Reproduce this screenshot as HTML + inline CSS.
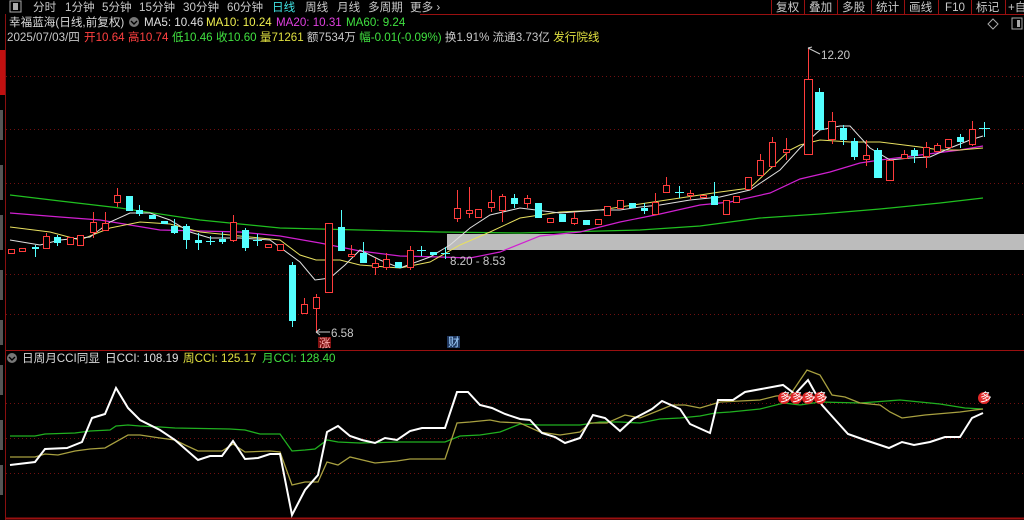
<!DOCTYPE html>
<html><head><meta charset="utf-8"><style>
html,body{margin:0;padding:0;background:#000;width:1024px;height:520px;overflow:hidden}
svg{display:block}
text{font-family:"Liberation Sans","Noto Sans CJK SC",sans-serif;font-size:11.6px}
.r{stroke:#ff3c3c;fill:#000;stroke-width:1}
.c{fill:#54ffff;stroke:#54ffff;stroke-width:1}
.wr{stroke:#ff3c3c;stroke-width:1}
.wc{stroke:#54ffff;stroke-width:1}
.g{stroke:#701010;stroke-dasharray:1 3;stroke-width:1}
</style></head><body>
<svg width="1024" height="520" viewBox="0 0 1024 520" xmlns="http://www.w3.org/2000/svg">
<rect width="1024" height="520" fill="#000"/>
<line x1="5.5" y1="14" x2="5.5" y2="520" stroke="#8a1010"/>
<rect x="0" y="50" width="5" height="45" fill="#c01010"/>
<rect x="0" y="110" width="3" height="30" fill="#555"/>
<rect x="0" y="165" width="3" height="35" fill="#555"/>
<rect x="0" y="215" width="3" height="35" fill="#555"/>
<rect x="0" y="270" width="3" height="30" fill="#555"/>
<rect x="0" y="320" width="3" height="25" fill="#555"/>
<rect x="0" y="365" width="3" height="30" fill="#555"/>
<rect x="0" y="420" width="3" height="30" fill="#555"/>
<rect x="0" y="465" width="3" height="30" fill="#555"/>
<rect x="10" y="1" width="11" height="11" fill="none" stroke="#aaa"/>
<rect x="13" y="3" width="5" height="7" fill="#aaa"/>
<g fill="#c8c8c8">
<text x="33" y="11">分时</text><text x="65" y="11">1分钟</text><text x="102" y="11">5分钟</text><text x="139" y="11">15分钟</text><text x="183" y="11">30分钟</text><text x="227" y="11">60分钟</text>
<text x="272" y="11" fill="#40e0e0">日线</text><text x="305" y="11">周线</text><text x="337" y="11">月线</text><text x="368" y="11">多周期</text><text x="410" y="11">更多 ›</text>
</g>
<line x1="420" y1="14.5" x2="1024" y2="14.5" stroke="#9a1010"/>
<g stroke="#9a1010"><line x1="771.5" y1="0" x2="771.5" y2="14"/><line x1="804.5" y1="0" x2="804.5" y2="14"/><line x1="837.5" y1="0" x2="837.5" y2="14"/><line x1="871.5" y1="0" x2="871.5" y2="14"/><line x1="904.5" y1="0" x2="904.5" y2="14"/><line x1="938.5" y1="0" x2="938.5" y2="14"/><line x1="971.5" y1="0" x2="971.5" y2="14"/><line x1="1005.5" y1="0" x2="1005.5" y2="14"/></g>
<g fill="#c8c8c8"><text x="776" y="11">复权</text><text x="809" y="11">叠加</text><text x="842" y="11">多股</text><text x="876" y="11">统计</text><text x="909" y="11">画线</text><text x="945" y="11">F10</text><text x="976" y="11">标记</text><text x="1008" y="11">+自</text></g>
<path d="M993 19 L998 24 L993 29 L988 24 Z" fill="none" stroke="#aaa"/>
<rect x="1012" y="18" width="10" height="11" fill="none" stroke="#aaa"/><rect x="1017" y="20" width="3" height="7" fill="#aaa"/>
<text x="9" y="26" fill="#d8d8d8">幸福蓝海(日线,前复权)</text>
<circle cx="134" cy="22" r="5" fill="#777"/><path d="M131 21 L134 24 L137 21" stroke="#000" fill="none" stroke-width="1.4"/>
<text x="144" y="26" fill="#e0e0e0">MA5: 10.46</text>
<text x="206" y="26" fill="#f0f050">MA10: 10.24</text>
<text x="276" y="26" fill="#e040e0">MA20: 10.31</text>
<text x="346" y="26" fill="#40e040">MA60: 9.24</text>
<text x="7" y="41" fill="#c8c8c8">2025/07/03/四</text>
<text x="84" y="41" fill="#ff4040">开10.64 高10.74</text>
<text x="172" y="41" fill="#40e040">低10.46</text><text x="216" y="41" fill="#e0e0e0"><tspan fill="#40e040">收10.60</tspan> <tspan fill="#e0e040">量71261</tspan> <tspan fill="#c8c8c8">额7534万</tspan> <tspan fill="#40e040">幅-0.01(-0.09%)</tspan> <tspan fill="#c8c8c8">换1.91% 流通3.73亿</tspan> <tspan fill="#e0e040">发行院线</tspan></text>
<g class="g"><line x1="6" y1="76.5" x2="1024" y2="76.5"/><line x1="6" y1="129.5" x2="1024" y2="129.5"/><line x1="6" y1="183.5" x2="1024" y2="183.5"/><line x1="6" y1="274.5" x2="1024" y2="274.5"/><line x1="6" y1="314.5" x2="1024" y2="314.5"/>
<line x1="6" y1="403.5" x2="1024" y2="403.5"/><line x1="6" y1="438.5" x2="1024" y2="438.5"/><line x1="6" y1="473.5" x2="1024" y2="473.5"/></g>
<rect x="447" y="234" width="577" height="16" fill="#bcbcbc"/>
<polyline fill="none" stroke="#20c020" stroke-width="1.2" points="10,195 60,201 120,208 200,220 280,228 360,230 440,232 520,233 560,232 640,230 700,226 760,218 820,214 880,209 940,203 983,198"/>
<polyline fill="none" stroke="#d020d0" stroke-width="1.2" points="10,213 60,217 100,220 130,225 160,230 200,231 240,232 280,236 320,243 360,251 400,256 440,257 470,258 500,252 540,236 580,232 620,222 660,214 700,205 730,202 770,193 800,179 830,172 860,163 880,160 920,155 960,150 983,146"/>
<polyline fill="none" stroke="#e8e060" stroke-width="1" points="10,227 50,232 80,240 110,228 140,222 170,224 200,232 240,236 280,240 300,255 316,260 340,260 360,265 400,268 430,262 460,245 490,232 520,218 560,212 600,210 640,204 680,198 720,192 750,188 790,150 800,145 820,140 850,142 880,142 920,147 940,150 960,150 983,148"/>
<polyline fill="none" stroke="#e0e0e0" stroke-width="1" points="10,240 40,245 60,240 90,237 110,222 130,213 150,213 170,220 190,232 210,238 240,238 270,240 300,262 315,280 330,278 345,265 360,250 380,260 400,268 430,257 450,245 470,228 490,215 520,208 560,213 600,210 620,210 640,207 660,205 690,200 720,197 750,190 780,170 800,148 820,130 840,126 850,126 870,148 890,160 910,158 930,157 950,148 970,140 983,136"/>
<g>
<rect class="r" x="8.5" y="249.5" width="6" height="4"/>
<rect class="r" x="19.5" y="248.5" width="6" height="3"/>
<line class="wc" x1="35.5" y1="245" x2="35.5" y2="257"/><rect class="c" x="32.5" y="247.5" width="6" height="1"/>
<line class="wr" x1="46.5" y1="233" x2="46.5" y2="249"/><rect class="r" x="43.5" y="236.5" width="6" height="12"/>
<line class="wc" x1="57.5" y1="235" x2="57.5" y2="246"/><rect class="c" x="54.5" y="237.5" width="6" height="5"/>
<rect class="r" x="67.5" y="237.5" width="6" height="7"/>
<rect class="r" x="77.5" y="235.5" width="6" height="10"/>
<line class="wr" x1="93.5" y1="212" x2="93.5" y2="238"/><rect class="r" x="90.5" y="222.5" width="6" height="10"/>
<line class="wr" x1="105.5" y1="212" x2="105.5" y2="231"/><rect class="r" x="102.5" y="223.5" width="6" height="7"/>
<line class="wr" x1="117.5" y1="188" x2="117.5" y2="207"/><rect class="r" x="114.5" y="195.5" width="6" height="7"/>
<rect class="c" x="126.5" y="196.5" width="6" height="14"/>
<line class="wc" x1="139.5" y1="205" x2="139.5" y2="216"/><rect class="c" x="136.5" y="210.5" width="6" height="3"/>
<rect class="c" x="149.5" y="215.5" width="6" height="3"/>
<rect class="c" x="161.5" y="221.5" width="6" height="2"/>
<line class="wc" x1="174.5" y1="219" x2="174.5" y2="234"/><rect class="c" x="171.5" y="226.5" width="6" height="6"/>
<line class="wc" x1="186.5" y1="224" x2="186.5" y2="249"/><rect class="c" x="183.5" y="226.5" width="6" height="13"/>
<line class="wc" x1="198.5" y1="233" x2="198.5" y2="250"/><rect class="c" x="195.5" y="240.5" width="6" height="2"/>
<line class="wc" x1="210.5" y1="236" x2="210.5" y2="245"/><line class="wc" x1="206" y1="241.5" x2="215" y2="241.5"/>
<line class="wc" x1="222.5" y1="232" x2="222.5" y2="244"/><rect class="c" x="219.5" y="239.5" width="6" height="2"/>
<line class="wr" x1="233.5" y1="215" x2="233.5" y2="242"/><rect class="r" x="230.5" y="222.5" width="6" height="18"/>
<line class="wc" x1="245.5" y1="228" x2="245.5" y2="251"/><rect class="c" x="242.5" y="230.5" width="6" height="17"/>
<line class="wc" x1="257.5" y1="234" x2="257.5" y2="246"/><line class="wc" x1="253" y1="240.5" x2="262" y2="240.5"/>
<rect class="r" x="265.5" y="244.5" width="6" height="3"/>
<rect class="r" x="277.5" y="244.5" width="6" height="6"/>
<line class="wc" x1="292.5" y1="262" x2="292.5" y2="327"/><rect class="c" x="289.5" y="265.5" width="6" height="55"/>
<line class="wr" x1="304.5" y1="298" x2="304.5" y2="313"/><rect class="r" x="301.5" y="304.5" width="6" height="9"/>
<line class="wr" x1="316.5" y1="294" x2="316.5" y2="333"/><rect class="r" x="313.5" y="297.5" width="6" height="11"/>
<rect class="r" x="325.5" y="223.5" width="7" height="69"/>
<line class="wc" x1="341.5" y1="210" x2="341.5" y2="250"/><rect class="c" x="338.5" y="227.5" width="6" height="23"/>
<line class="wr" x1="351.5" y1="245" x2="351.5" y2="256"/><rect class="r" x="348.5" y="254.5" width="6" height="2"/>
<line class="wc" x1="363.5" y1="242" x2="363.5" y2="263"/><rect class="c" x="360.5" y="253.5" width="6" height="9"/>
<line class="wr" x1="375.5" y1="258" x2="375.5" y2="275"/><rect class="r" x="372.5" y="263.5" width="6" height="4"/>
<line class="wr" x1="386.5" y1="253" x2="386.5" y2="270"/><rect class="r" x="383.5" y="259.5" width="6" height="8"/>
<rect class="c" x="395.5" y="262.5" width="6" height="5"/>
<line class="wr" x1="410.5" y1="246" x2="410.5" y2="270"/><rect class="r" x="407.5" y="250.5" width="6" height="17"/>
<line class="wc" x1="421.5" y1="246" x2="421.5" y2="256"/><line class="wc" x1="417" y1="250.5" x2="426" y2="250.5"/>
<rect class="c" x="430.5" y="252.5" width="6" height="2"/>
<line class="wc" x1="445.5" y1="247" x2="445.5" y2="259"/><line class="wc" x1="441" y1="253.5" x2="450" y2="253.5"/>
<line class="wr" x1="457.5" y1="190" x2="457.5" y2="222"/><rect class="r" x="454.5" y="208.5" width="6" height="10"/>
<line class="wr" x1="469.5" y1="187" x2="469.5" y2="218"/><rect class="r" x="466.5" y="210.5" width="6" height="3"/>
<rect class="r" x="475.5" y="209.5" width="6" height="8"/>
<line class="wr" x1="491.5" y1="190" x2="491.5" y2="212"/><rect class="r" x="488.5" y="202.5" width="6" height="5"/>
<line class="wr" x1="502.5" y1="194" x2="502.5" y2="222"/><rect class="r" x="499.5" y="196.5" width="6" height="14"/>
<line class="wc" x1="514.5" y1="194" x2="514.5" y2="208"/><rect class="c" x="511.5" y="198.5" width="6" height="5"/>
<line class="wr" x1="527.5" y1="195" x2="527.5" y2="208"/><rect class="r" x="524.5" y="198.5" width="6" height="5"/>
<rect class="c" x="535.5" y="203.5" width="6" height="14"/>
<rect class="r" x="547.5" y="218.5" width="6" height="4"/>
<rect class="c" x="559.5" y="214.5" width="6" height="7"/>
<line class="wr" x1="574.5" y1="212" x2="574.5" y2="225"/><rect class="r" x="571.5" y="218.5" width="6" height="5"/>
<rect class="c" x="583.5" y="220.5" width="6" height="4"/>
<rect class="r" x="595.5" y="219.5" width="6" height="5"/>
<rect class="r" x="604.5" y="206.5" width="6" height="9"/>
<rect class="r" x="617.5" y="200.5" width="6" height="8"/>
<rect class="c" x="629.5" y="203.5" width="6" height="4"/>
<line class="wc" x1="644.5" y1="203" x2="644.5" y2="214"/><rect class="c" x="641.5" y="208.5" width="6" height="2"/>
<line class="wr" x1="655.5" y1="193" x2="655.5" y2="215"/><rect class="r" x="652.5" y="202.5" width="6" height="12"/>
<line class="wr" x1="666.5" y1="177" x2="666.5" y2="193"/><rect class="r" x="663.5" y="185.5" width="6" height="7"/>
<line class="wc" x1="679.5" y1="186" x2="679.5" y2="198"/><line class="wc" x1="675" y1="192.5" x2="684" y2="192.5"/>
<line class="wr" x1="690.5" y1="190" x2="690.5" y2="200"/><rect class="r" x="687.5" y="193.5" width="6" height="2"/>
<rect class="r" x="700.5" y="195.5" width="6" height="2"/>
<line class="wc" x1="714.5" y1="182" x2="714.5" y2="205"/><rect class="c" x="711.5" y="196.5" width="6" height="8"/>
<rect class="r" x="723.5" y="200.5" width="6" height="14"/>
<rect class="r" x="733.5" y="196.5" width="6" height="6"/>
<rect class="r" x="745.5" y="177.5" width="6" height="12"/>
<line class="wr" x1="760.5" y1="154" x2="760.5" y2="176"/><rect class="r" x="757.5" y="160.5" width="6" height="15"/>
<line class="wr" x1="772.5" y1="137" x2="772.5" y2="167"/><rect class="r" x="769.5" y="142.5" width="6" height="24"/>
<line class="wr" x1="786.5" y1="138" x2="786.5" y2="160"/><rect class="r" x="783.5" y="149.5" width="6" height="3"/>
<line class="wr" x1="808.5" y1="48" x2="808.5" y2="80"/><rect class="r" x="804.5" y="79.5" width="8" height="75"/>
<line class="wc" x1="819.5" y1="88" x2="819.5" y2="92"/><rect class="c" x="815.5" y="92.5" width="8" height="37"/>
<line class="wr" x1="832.5" y1="112" x2="832.5" y2="144"/><rect class="r" x="828.5" y="121.5" width="7" height="18"/>
<line class="wc" x1="843.5" y1="125" x2="843.5" y2="145"/><rect class="c" x="840.5" y="128.5" width="6" height="11"/>
<line class="wc" x1="854.5" y1="138" x2="854.5" y2="160"/><rect class="c" x="851.5" y="141.5" width="6" height="15"/>
<line class="wr" x1="866.5" y1="140" x2="866.5" y2="166"/><rect class="r" x="863.5" y="155.5" width="6" height="4"/>
<line class="wc" x1="877.5" y1="148" x2="877.5" y2="178"/><rect class="c" x="874.5" y="150.5" width="7" height="27"/>
<rect class="r" x="886.5" y="160.5" width="7" height="20"/>
<line class="wr" x1="904.5" y1="150" x2="904.5" y2="159"/><rect class="r" x="901.5" y="154.5" width="6" height="4"/>
<line class="wc" x1="914.5" y1="148" x2="914.5" y2="163"/><rect class="c" x="911.5" y="150.5" width="6" height="5"/>
<line class="wr" x1="926.5" y1="142" x2="926.5" y2="168"/><rect class="r" x="923.5" y="147.5" width="6" height="9"/>
<line class="wr" x1="937.5" y1="143" x2="937.5" y2="152"/><rect class="r" x="934.5" y="145.5" width="6" height="6"/>
<rect class="r" x="945.5" y="139.5" width="6" height="8"/>
<line class="wc" x1="960.5" y1="134" x2="960.5" y2="148"/><rect class="c" x="957.5" y="137.5" width="6" height="4"/>
<line class="wr" x1="972.5" y1="121" x2="972.5" y2="146"/><rect class="r" x="969.5" y="129.5" width="6" height="15"/>
<line class="wc" x1="984.5" y1="122" x2="984.5" y2="137"/><line class="wc" x1="979" y1="128.5" x2="990" y2="128.5"/>
</g>
<path d="M808 48 L812 47 M808 48 L820 54" stroke="#ccc" fill="none"/>
<text x="821" y="59" fill="#c8c8c8">12.20</text>
<path d="M316 332 L330 332 M316 332 L320 329 M316 332 L320 335" stroke="#ccc" fill="none"/>
<text x="331" y="337" fill="#c8c8c8">6.58</text>
<text x="450" y="265" fill="#c8c8c8">8.20 - 8.53</text>
<rect x="318" y="337" width="13" height="11" fill="#801010"/><text x="319" y="347" fill="#ffb0b0" font-size="11">涨</text>
<rect x="447" y="336" width="13" height="12" fill="#203860"/><text x="448" y="346" fill="#a0d0ff" font-size="11">财</text>
<line x1="6" y1="350.5" x2="1024" y2="350.5" stroke="#9a1010"/>
<line x1="6" y1="518.5" x2="1024" y2="518.5" stroke="#9a1010" stroke-width="2"/>
<circle cx="12" cy="358" r="5" fill="#777"/><path d="M9 357 L12 360 L15 357" stroke="#000" fill="none" stroke-width="1.4"/>
<text x="22" y="362" fill="#d8d8d8">日周月CCI同显</text>
<text x="105" y="362" fill="#e0e0e0">日CCI: 108.19</text>
<text x="183" y="362" fill="#e0e040">周CCI: 125.17</text>
<text x="262" y="362" fill="#40e040">月CCI: 128.40</text>
<polyline fill="none" stroke="#20b020" stroke-width="1.3" points="10,436 35,436 45,434 75,433 90,431 110,430 116,426 128,425 140,426 160,427 175,428 230,429 245,430 260,434 280,434 292,451 305,450 315,449 327,440 338,442 360,443 400,442 445,442 460,436 480,435 500,432 520,424 540,425 580,425 600,422 620,422 640,423 660,419 680,418 700,416 715,413 730,412 760,409 784,403 800,405 820,402 860,403 900,400 940,404 965,408 983,409"/>
<polyline fill="none" stroke="#a8a040" stroke-width="1.3" points="10,457 35,457 45,454 58,455 75,451 90,449 105,448 128,435 140,435 160,438 175,440 185,445 198,451 222,451 233,444 245,452 270,451 280,452 292,485 305,482 318,482 327,462 338,465 350,457 375,463 397,461 410,459 445,459 457,423 470,422 490,420 500,422 520,423 540,432 560,435 580,432 590,423 607,423 625,415 640,418 660,410 672,405 685,405 700,408 720,402 760,400 776,396 790,395 807,370 820,375 832,395 845,397 860,403 880,405 890,412 902,418 925,415 960,412 975,410 983,409"/>
<polyline fill="none" stroke="#ffffff" stroke-width="2" points="10,465 35,462 45,449 67,448 82,442 92,418 105,414 116,388 128,408 140,420 160,430 175,440 198,460 210,456 222,456 233,441 245,459 258,458 270,454 280,454 292,515 305,490 318,475 327,432 338,426 350,436 362,440 375,443 385,438 397,440 410,431 422,428 445,428 457,392 468,392 480,405 492,408 505,414 520,419 530,420 542,433 555,437 565,443 580,438 593,415 605,418 620,431 633,419 652,409 662,401 680,409 690,424 710,433 718,400 733,400 745,392 783,385 795,394 808,380 822,405 830,414 848,434 865,440 889,448 902,442 914,445 930,442 945,437 960,437 972,418 983,413"/>
<g fill="#fff">
<circle cx="784" cy="398" r="6" fill="#e02828"/><circle cx="796" cy="398" r="6" fill="#e02828"/><circle cx="808" cy="398" r="6" fill="#e02828"/><circle cx="820" cy="398" r="6" fill="#e02828"/><circle cx="984" cy="398" r="6" fill="#e02828"/>
<text x="780" y="401" font-size="8">多</text><text x="792" y="401" font-size="8">多</text><text x="804" y="401" font-size="8">多</text><text x="816" y="401" font-size="8">多</text><text x="980" y="401" font-size="8">多</text>
</g>
</svg>
</body></html>
